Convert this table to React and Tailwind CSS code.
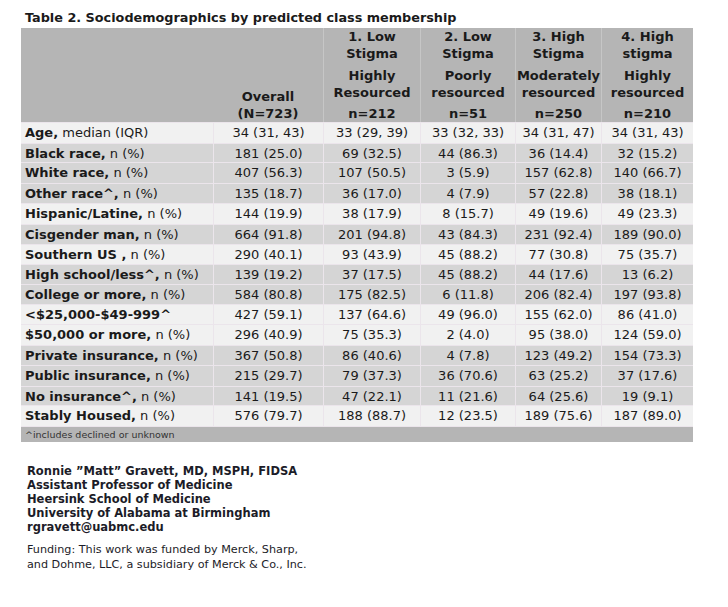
import React from 'react';

// Table 2 rows: label (bold part), suffix (normal), values, bg, height
const rows = [
    { label: 'Age,', rest: ' median (IQR)', vals: ['34 (31, 43)', '33 (29, 39)', '33 (32, 33)', '34 (31, 47)', '34 (31, 43)'], dark: false, h: 'h-[21px]' },
    { label: 'Black race,', rest: ' n (%)', vals: ['181 (25.0)', '69 (32.5)', '44 (86.3)', '36 (14.4)', '32 (15.2)'], dark: true, h: 'h-[19px]' },
    { label: 'White race,', rest: ' n (%)', vals: ['407 (56.3)', '107 (50.5)', '3 (5.9)', '157 (62.8)', '140 (66.7)'], dark: true, h: 'h-[21px]' },
    { label: 'Other race^,', rest: ' n (%)', vals: ['135 (18.7)', '36 (17.0)', '4 (7.9)', '57 (22.8)', '38 (18.1)'], dark: true, h: 'h-[20px]' },
    { label: 'Hispanic/Latine,', rest: ' n (%)', vals: ['144 (19.9)', '38 (17.9)', '8 (15.7)', '49 (19.6)', '49 (23.3)'], dark: false, h: 'h-[21px]' },
    { label: 'Cisgender man,', rest: ' n (%)', vals: ['664 (91.8)', '201 (94.8)', '43 (84.3)', '231 (92.4)', '189 (90.0)'], dark: true, h: 'h-[20px]' },
    { label: 'Southern US ,', rest: ' n (%)', vals: ['290 (40.1)', '93 (43.9)', '45 (88.2)', '77 (30.8)', '75 (35.7)'], dark: false, h: 'h-[20px]' },
    { label: 'High school/less^,', rest: ' n (%)', vals: ['139 (19.2)', '37 (17.5)', '45 (88.2)', '44 (17.6)', '13 (6.2)'], dark: true, h: 'h-[20px]' },
    { label: 'College or more,', rest: ' n (%)', vals: ['584 (80.8)', '175 (82.5)', '6 (11.8)', '206 (82.4)', '197 (93.8)'], dark: true, h: 'h-[20px]' },
    { label: '<$25,000-$49-999^', rest: '', vals: ['427 (59.1)', '137 (64.6)', '49 (96.0)', '155 (62.0)', '86 (41.0)'], dark: false, h: 'h-[20px]' },
    { label: '$50,000 or more,', rest: ' n (%)', vals: ['296 (40.9)', '75 (35.3)', '2 (4.0)', '95 (38.0)', '124 (59.0)'], dark: false, h: 'h-[21px]' },
    { label: 'Private insurance,', rest: ' n (%)', vals: ['367 (50.8)', '86 (40.6)', '4 (7.8)', '123 (49.2)', '154 (73.3)'], dark: true, h: 'h-[20px]' },
    { label: 'Public insurance,', rest: ' n (%)', vals: ['215 (29.7)', '79 (37.3)', '36 (70.6)', '63 (25.2)', '37 (17.6)'], dark: true, h: 'h-[21px]' },
    { label: 'No insurance^,', rest: ' n (%)', vals: ['141 (19.5)', '47 (22.1)', '11 (21.6)', '64 (25.6)', '19 (9.1)'], dark: true, h: 'h-[19px]' },
    { label: 'Stably Housed,', rest: ' n (%)', vals: ['576 (79.7)', '188 (88.7)', '12 (23.5)', '189 (75.6)', '187 (89.0)'], dark: false, h: 'h-[21px]' },
];

const groups = [
    { title: ['1. Low', 'Stigma'], sub: ['Highly', 'Resourced'], n: 'n=212' },
    { title: ['2. Low', 'Stigma'], sub: ['Poorly', 'resourced'], n: 'n=51' },
    { title: ['3. High', 'Stigma'], sub: ['Moderately', 'resourced'], n: 'n=250' },
    { title: ['4. High', 'stigma'], sub: ['Highly', 'resourced'], n: 'n=210' },
];

const cols = 'grid grid-cols-[192px_110px_97px_95px_86px_92px]';

export default function App() {
    return (
        <div className="w-[728px] h-[607px] bg-white text-[#1a1a1a] font-['DejaVu_Sans',Verdana,sans-serif]">
            {/* Title */}
            <h1 className="pt-[9px] pl-[25px] text-[12.8px] leading-[17px] font-bold">
                Table 2. Sociodemographics by predicted class membership
            </h1>

            {/* Table */}
            <div className="mt-[2px] ml-[21px] w-[672px] text-[13px]">
                {/* Header */}
                <div className={`${cols} h-[94px] bg-[#b5b5b5] font-bold leading-[17px] text-center`}>
                    <div />
                    <div className="flex flex-col justify-end">
                        <p>Overall</p>
                        <p>(N=723)</p>
                    </div>
                    {groups.map((g) => (
                        <div key={g.n} className="flex flex-col justify-end border-l border-[#c6c6c6]">
                            <p>{g.title[0]}<br />{g.title[1]}</p>
                            <p className="mt-[5px]">{g.sub[0]}<br />{g.sub[1]}</p>
                            <p className="mt-[4px]">{g.n}</p>
                        </div>
                    ))}
                </div>

                {/* Body */}
                {rows.map((r) => (
                    <div
                        key={r.label}
                        className={`${cols} ${r.h} border-t border-[#ebe5eb] ${r.dark ? 'bg-[#d5d5d5]' : 'bg-[#f1f1f1]'}`}
                    >
                        <div className="flex items-center pl-[4px] whitespace-nowrap">
                            <span className="font-bold">{r.label}</span>
                            {r.rest && <span className="whitespace-pre">{r.rest}</span>}
                        </div>
                        {r.vals.map((v, i) => (
                            <div key={i} className="flex items-center justify-center border-l border-[#ebe5eb]">
                                {v}
                            </div>
                        ))}
                    </div>
                ))}

                {/* Footnote */}
                <div className="h-[16px] border-t border-[#ebe5eb] bg-[#b5b5b5] pl-[4px] text-[9.5px] leading-[15px] text-[#333]">
                    ^includes declined or unknown
                </div>
            </div>

            {/* Author */}
            <div className="mt-[22px] pl-[27px] text-[11.5px] leading-[14px] font-bold text-[#1c1c28]">
                <p>Ronnie ”Matt” Gravett, MD, MSPH, FIDSA</p>
                <p>Assistant Professor of Medicine</p>
                <p>Heersink School of Medicine</p>
                <p>University of Alabama at Birmingham</p>
                <p>rgravett@uabmc.edu</p>
            </div>

            {/* Funding */}
            <div className="mt-[8px] pl-[27px] text-[11.2px] leading-[15px] text-[#1c1c28]">
                <p>Funding: This work was funded by Merck, Sharp,</p>
                <p>and Dohme, LLC, a subsidiary of Merck &amp; Co., Inc.</p>
            </div>
        </div>
    );
}
